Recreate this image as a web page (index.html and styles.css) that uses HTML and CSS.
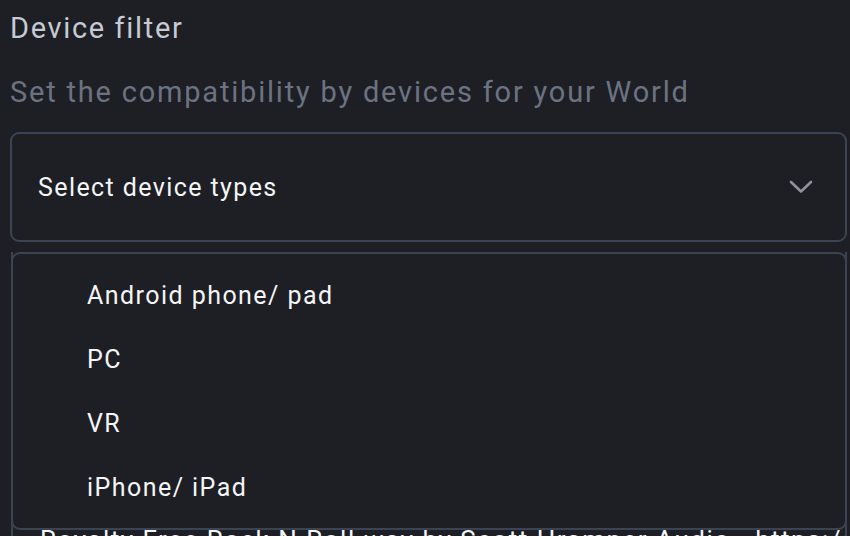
FILE: index.html
```html
<!DOCTYPE html>
<html>
<head>
<meta charset="utf-8">
<link rel="stylesheet" href="styles.css">
</head>
<body>
<div class="page">
  <h2 class="title">Device filter</h2>
  <p class="subtitle">Set the compatibility by devices for your World</p>
  <div class="field">
    <div class="select">
      <span class="select-label">Select device types</span>
      <svg class="chevron" width="24" height="14" viewBox="0 0 24 14"><path d="M2 2 L12 11.5 L22 2" fill="none" stroke="#8e9299" stroke-width="2.6" stroke-linecap="round" stroke-linejoin="round"/></svg>
    </div>
    <ul class="menu">
      <li class="option">Android phone/ pad</li>
      <li class="option">PC</li>
      <li class="option">VR</li>
      <li class="option">iPhone/ iPad</li>
    </ul>
  </div>
  <div class="behind">
    <div class="behind-box">
      <p class="credit">Royalty Free Rock N Roll.wav by Scott Hramper Audio - https://freesound.org</p>
    </div>
  </div>
</div>
</body>
</html>
```
FILE: styles.css
```css
html, body {
  margin: 0;
  padding: 0;
  background: #1e1f24;
  overflow: hidden;
}
body {
  font-family: Roboto, "Noto Sans", sans-serif;
  width: 850px;
  height: 536px;
}
.page {
  padding: 0 3px 0 10px;
}
.title {
  margin: 0;
  padding-top: 9px;
  font-size: 29px;
  line-height: 38px;
  font-weight: 400;
  letter-spacing: 1.65px;
  color: #c5cad4;
}
.subtitle {
  margin: 28px 0 0;
  font-size: 29px;
  line-height: 34px;
  font-weight: 400;
  letter-spacing: 1.8px;
  color: #6b7383;
}
.field {
  position: relative;
  margin-top: 23px;
}
.select {
  height: 110px;
  box-sizing: border-box;
  border: 2px solid #3a4454;
  border-radius: 9px;
  display: flex;
  align-items: center;
  justify-content: space-between;
  padding: 0 32px 0 26px;
}
.select-label {
  font-size: 25px;
  letter-spacing: 1.4px;
  color: #f4f5f7;
}
.chevron {
  display: block;
}
.menu {
  position: absolute;
  left: 1px;
  right: 0;
  top: 120px;
  margin: 0;
  padding: 9px 0 9px;
  list-style: none;
  background: #1e1f24;
  border: 2px solid #3a4454;
  border-radius: 9px;
  z-index: 2;
}
.option {
  height: 64px;
  display: flex;
  align-items: center;
  padding-left: 74px;
  font-size: 25px;
  letter-spacing: 1.45px;
  color: #f4f5f7;
}
.behind {
  margin-top: 10px;
}
.behind-box {
  height: 400px;
  border-left: 2px solid #3a4454;
  border-right: 2px solid #3a4454;
  margin-left: 1px;
  padding: 273px 0 0 27px;
}
.credit {
  margin: 0;
  font-size: 26px;
  line-height: 30px;
  letter-spacing: 1.5px;
  color: #f4f5f7;
  white-space: nowrap;
  overflow: hidden;
}
```
